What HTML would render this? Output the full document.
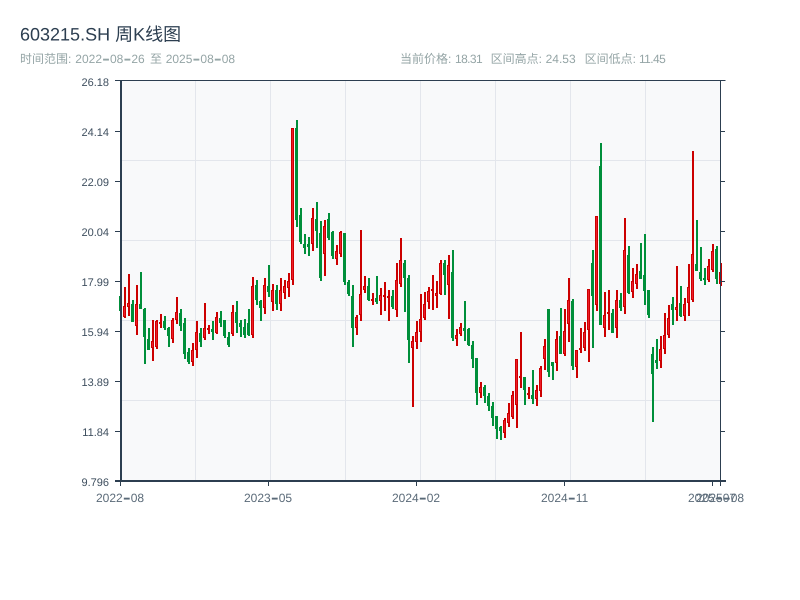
<!DOCTYPE html>
<html lang="zh">
<head>
<meta charset="utf-8">
<title>603215.SH 周K线图</title>
<style>
html,body{margin:0;padding:0;background:#fff;width:800px;height:600px;overflow:hidden}
svg{display:block}
text{font-family:"Liberation Sans","Noto Sans CJK SC",sans-serif;text-rendering:geometricPrecision}
</style>
</head>
<body>
<svg width="800" height="600" viewBox="0 0 800 600" xmlns="http://www.w3.org/2000/svg">
<rect x="120" y="81" width="600" height="400" fill="#f8f9fa"/>
<path d="M195.5 81V481M270.5 81V481M345.5 81V481M420.5 81V481M495.5 81V481M570.5 81V481M645.5 81V481M120 160.5H720M120 240.5H720M120 320.5H720M120 400.5H720" stroke="#e3e6ec" stroke-width="1" fill="none"/>

<path stroke="#cc0000" stroke-width="2" fill="none" d="M125 287V318M129 274V316M137 285V335M153 320V361M157 320V349M161 314V328M173 318V343M177 297V324M193 343V366M197 321V358M205 303V340M209 325V334M217 312V334M233 305V336M253 277V338M265 278V314M273 284V311M281 278V311M285 280V299M289 273V297M293 128V285M313 208V251M325 220V276M337 245V265M341 231V257M357 315V335M361 230V321M365 276V293M373 293V305M381 288V315M385 282V311M389 290V321M397 263V317M401 238V287M413 336V407M417 321V349M421 294V342M425 292V320M429 287V309M433 275V310M437 281V308M441 260V295M449 255V319M457 329V346M461 323V336M481 382V398M505 418V438M509 403V427M513 391V419M517 359V428M521 332V388M529 387V399M537 385V406M541 366V397M545 339V370M557 331V371M565 309V356M569 278V342M577 350V378M581 328V353M585 322V351M589 289V362M597 216V311M605 292V337M609 290V330M617 290V338M625 218V314M633 268V298M637 264V289M661 336V368M665 313V354M669 305V338M677 266V321M685 298V321M689 264V316M693 151V302M709 259V282M713 244V272M721 263V286"/>
<path stroke="#cc0000" stroke-width="1" fill="#ee1c2a" d="M123.500 306.500h2V316.500h-2zM127.500 303.500h2V306.500h-2zM135.500 304.500h2V325.500h-2zM151.500 341.500h2V347.500h-2zM155.500 321.500h2V346.500h-2zM159.500 322.500h2V323.500h-2zM171.500 320.500h2V338.500h-2zM175.500 312.500h2V319.500h-2zM191.500 350.500h2V361.500h-2zM195.500 332.500h2V349.500h-2zM203.500 328.500h2V337.500h-2zM207.500 328.500h2V329.500h-2zM215.500 317.500h2V332.500h-2zM231.500 312.500h2V333.500h-2zM251.500 286.500h2V334.500h-2zM263.500 285.500h2V307.500h-2zM271.500 290.500h2V301.500h-2zM279.500 290.500h2V303.500h-2zM283.500 286.500h2V292.500h-2zM287.500 281.500h2V287.500h-2zM291.500 128.500h2V279.500h-2zM311.500 218.500h2V243.500h-2zM323.500 226.500h2V253.500h-2zM335.500 251.500h2V258.500h-2zM339.500 232.500h2V253.500h-2zM355.500 317.500h2V327.500h-2zM359.500 294.500h2V314.500h-2zM363.500 286.500h2V289.500h-2zM371.500 299.500h2V300.500h-2zM379.500 295.500h2V300.500h-2zM383.500 295.500h2V296.500h-2zM387.500 296.500h2V297.500h-2zM395.500 280.500h2V309.500h-2zM399.500 260.500h2V283.500h-2zM411.500 341.500h2V347.500h-2zM415.500 332.500h2V341.500h-2zM419.500 319.500h2V331.500h-2zM423.500 304.500h2V317.500h-2zM427.500 291.500h2V301.500h-2zM431.500 289.500h2V290.500h-2zM435.500 293.500h2V295.500h-2zM439.500 263.500h2V293.500h-2zM447.500 265.500h2V284.500h-2zM455.500 335.500h2V338.500h-2zM459.500 327.500h2V333.500h-2zM479.500 387.500h2V392.500h-2zM503.500 420.500h2V432.500h-2zM507.500 413.500h2V422.500h-2zM511.500 395.500h2V416.500h-2zM515.500 359.500h2V404.500h-2zM519.500 376.500h2V377.500h-2zM527.500 393.500h2V394.500h-2zM535.500 390.500h2V398.500h-2zM539.500 368.500h2V390.500h-2zM543.500 346.500h2V358.500h-2zM555.500 339.500h2V362.500h-2zM563.500 331.500h2V353.500h-2zM567.500 300.500h2V323.500h-2zM575.500 350.500h2V366.500h-2zM579.500 348.500h2V349.500h-2zM583.500 332.500h2V347.500h-2zM587.500 289.500h2V329.500h-2zM595.500 216.500h2V304.500h-2zM603.500 315.500h2V327.500h-2zM607.500 312.500h2V313.500h-2zM615.500 300.500h2V327.500h-2zM623.500 250.500h2V306.500h-2zM631.500 281.500h2V291.500h-2zM635.500 274.500h2V283.500h-2zM659.500 349.500h2V360.500h-2zM663.500 335.500h2V348.500h-2zM667.500 318.500h2V334.500h-2zM675.500 307.500h2V309.500h-2zM683.500 304.500h2V315.500h-2zM687.500 287.500h2V302.500h-2zM691.500 254.500h2V299.500h-2zM707.500 266.500h2V279.500h-2zM711.500 251.500h2V269.500h-2zM719.500 272.500h2V283.500h-2z"/>

<path stroke="#008f3a" stroke-width="2" fill="none" d="M121 296V311M133 300V322M141 272V309M145 308V364M149 328V350M165 316V330M169 327V347M181 309V331M185 318V359M189 348V364M201 328V347M213 321V340M221 311V327M225 320V338M229 332V347M237 301V333M241 320V337M245 319V338M249 309V336M257 280V305M261 300V321M269 265V297M277 285V310M297 120V227M301 208V244M305 234V254M309 237V256M317 202V248M321 221V281M329 213V240M333 231V259M345 233V285M349 280V296M353 285V347M369 278V301M377 276V304M393 290V309M405 260V312M409 275V363M445 260V295M453 250V341M465 301V341M469 328V346M473 341V368M477 358V405M485 385V403M489 393V411M493 402V426M497 416V439M501 426V440M525 377V405M533 370V404M549 309V377M553 362V380M561 308V354M573 299V370M593 250V348M601 143V325M613 309V333M621 293V311M629 246V294M641 243V279M645 234V305M649 290V318M653 347V422M657 339V369M673 297V325M681 286V317M697 220V271M701 247V281M705 268V285M717 246V284"/>
<path fill="#008f3a" d="M119 296h3V311h-3zM131 304h3V322h-3zM139 304h3V309h-3zM143 309h3V337h-3zM147 339h3V350h-3zM163 321h3V328h-3zM167 328h3V336h-3zM179 313h3V326h-3zM183 323h3V354h-3zM187 352h3V362h-3zM199 333h3V342h-3zM211 329h3V332h-3zM219 318h3V323h-3zM223 320h3V336h-3zM227 337h3V345h-3zM235 312h3V323h-3zM239 323h3V327h-3zM243 327h3V335h-3zM247 323h3V335h-3zM255 285h3V300h-3zM259 301h3V308h-3zM267 286h3V292h-3zM275 290h3V304h-3zM295 128h3V220h-3zM299 215h3V242h-3zM303 244h3V248h-3zM307 244h3V247h-3zM315 219h3V231h-3zM319 233h3V278h-3zM327 219h3V238h-3zM331 232h3V256h-3zM343 233h3V282h-3zM347 282h3V294h-3zM351 296h3V328h-3zM367 286h3V300h-3zM375 298h3V302h-3zM391 296h3V307h-3zM403 263h3V278h-3zM407 278h3V340h-3zM443 263h3V275h-3zM451 272h3V338h-3zM463 328h3V331h-3zM467 329h3V345h-3zM471 345h3V359h-3zM475 358h3V393h-3zM483 387h3V396h-3zM487 396h3V406h-3zM491 406h3V418h-3zM495 416h3V429h-3zM499 427h3V431h-3zM523 377h3V390h-3zM531 395h3V399h-3zM547 309h3V372h-3zM551 362h3V366h-3zM559 336h3V354h-3zM571 301h3V366h-3zM591 263h3V296h-3zM599 166h3V325h-3zM611 313h3V333h-3zM619 300h3V308h-3zM627 255h3V293h-3zM639 271h3V279h-3zM643 275h3V291h-3zM647 290h3V315h-3zM651 354h3V374h-3zM655 360h3V363h-3zM671 304h3V310h-3zM679 303h3V316h-3zM695 264h3V271h-3zM699 272h3V279h-3zM703 278h3V280h-3zM715 249h3V279h-3z"/>

<!-- axes -->
<path fill="none" stroke="#2c3e50" stroke-width="1" d="M115 80.500H725.500M720.500 81V481M720 131.500H725M720 181.500H725M720 231.500H725M720 281.500H725M720 331.500H725M720 381.500H725M720 431.500H725M115 131.500H120M115 181.500H120M115 231.500H120M115 281.500H120M115 331.500H120M115 381.500H120M115 431.500H120M120.500 482V486M268.500 482V486M416.500 482V486M564.500 482V486M712.500 482V486M720.500 482V486"/>
<path fill="none" stroke="#2c3e50" stroke-width="2" d="M121 81V482M115 481H726"/>

<g font-size="11" fill="#3f4f5f" text-anchor="end">
<text x="109" y="86">26.18</text>
<text x="109" y="136">24.14</text>
<text x="109" y="186">22.09</text>
<text x="109" y="236">20.04</text>
<text x="109" y="286">17.99</text>
<text x="109" y="336">15.94</text>
<text x="109" y="386">13.89</text>
<text x="109" y="436">11.84</text>
<text x="109" y="486">9.796</text>
</g>
<g font-size="12" fill="#5a6a78">
<text x="96" y="502">2022<tspan font-size="24" dy="3" dx="0">-</tspan><tspan dy="-3" dx="0">08</tspan></text>
<text x="244" y="502">2023<tspan font-size="24" dy="3" dx="0">-</tspan><tspan dy="-3" dx="0">05</tspan></text>
<text x="392" y="502">2024<tspan font-size="24" dy="3" dx="0">-</tspan><tspan dy="-3" dx="0">02</tspan></text>
<text x="541" y="502">2024<tspan font-size="24" dy="3" dx="0">-</tspan><tspan dy="-3" dx="0">11</tspan></text>
<text x="688" y="502">2025<tspan font-size="24" dy="3" dx="0">-</tspan><tspan dy="-3" dx="0">07</tspan></text>
<text x="696" y="502">2025<tspan font-size="24" dy="3" dx="0">-</tspan><tspan dy="-3" dx="0">08</tspan></text>
</g>
<text x="20" y="40.500" font-size="18" fill="#2c3e50">603215.SH 周K线图</text>
<g font-size="12" fill="#95a5a6">
<text x="20" y="63">时间范围: <tspan x="75.300">2022</tspan><tspan font-size="24" dy="3">-</tspan><tspan dy="-3">08</tspan><tspan font-size="24" dy="3">-</tspan><tspan dy="-3">26</tspan> <tspan x="150">至</tspan> <tspan x="165.700">2025</tspan><tspan font-size="24" dy="3">-</tspan><tspan dy="-3">08</tspan><tspan font-size="24" dy="3">-</tspan><tspan dy="-3">08</tspan></text>
<text x="400" y="63">当前价格: <tspan x="455" letter-spacing="-.6">18.31</tspan></text>
<text x="490.600" y="63">区间高点: <tspan x="545.600">24.53</tspan></text>
<text x="584.600" y="63">区间低点: <tspan x="639" letter-spacing="-.6">11.45</tspan></text>
</g>
</svg>
</body>
</html>
